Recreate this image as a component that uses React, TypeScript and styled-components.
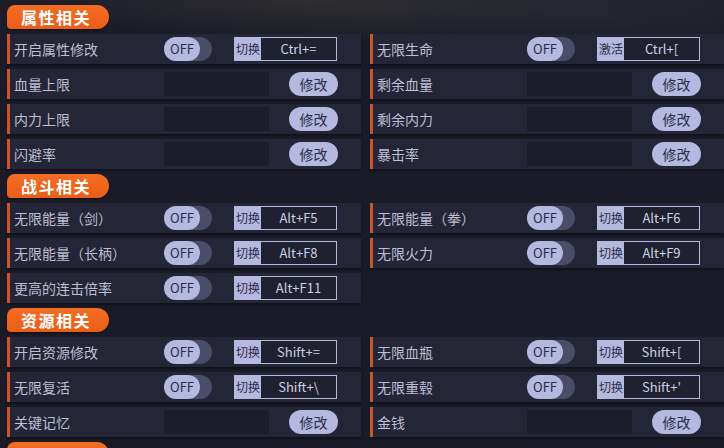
import React from "react";
import styled, { createGlobalStyle } from "styled-components";

const Global = createGlobalStyle`
  html, body { margin: 0; padding: 0; }
  body {
    width: 724px;
    height: 448px;
    overflow: hidden;
    background: #1a1b26;
    font-family: "Noto Sans CJK SC", "Noto Sans", sans-serif;
  }
`;

const Page = styled.div`
  width: 724px;
  height: 448px;
  box-sizing: border-box;
  padding: 5px 0 0 7px;
  background:
    radial-gradient(ellipse 260px 40px at 300px 0px, rgba(120, 110, 80, 0.18), transparent),
    radial-gradient(ellipse 300px 45px at 560px 10px, rgba(90, 100, 90, 0.16), transparent),
    linear-gradient(#1d1e29 0px, #1a1b26 40px);
  display: flex;
  flex-direction: column;
  gap: 5px;
  overflow: hidden;
`;

const Section = styled.section`
  display: flex;
  flex-direction: column;
  gap: 5px;
`;

const Header = styled.div`
  width: 102px;
  height: 24px;
  box-sizing: border-box;
  background: linear-gradient(#f46d24, #ea5d18);
  border-radius: 8px 12px 12px 4px;
  color: #fff;
  font-weight: 700;
  font-size: 16px;
  line-height: 24px;
  letter-spacing: 1.5px;
  padding-left: 14px;
  box-shadow: 0 1px 2px rgba(0, 0, 0, 0.5);
`;

const Grid = styled.div`
  display: grid;
  grid-template-columns: 354px 354px;
  column-gap: 9px;
  row-gap: 5px;
`;

const Row = styled.div`
  height: 30px;
  box-sizing: border-box;
  background: #242536;
  border-left: 3px solid #c9562b;
  display: flex;
  align-items: center;
  box-shadow: 0 2px 2px rgba(0, 0, 0, 0.35);
`;

const Label = styled.div`
  width: 154px;
  padding-left: 4px;
  box-sizing: border-box;
  color: #bdbfd4;
  font-size: 14px;
  white-space: nowrap;
`;

const Toggle = styled.div`
  width: 48px;
  height: 24px;
  border-radius: 12px;
  background: #4b4d68;
  flex: none;
`;

const Knob = styled.div`
  width: 36px;
  height: 24px;
  border-radius: 12px;
  background: #b5b8df;
  color: #2b2d47;
  font-size: 13px;
  line-height: 24px;
  text-align: center;
`;

const Hotkey = styled.div`
  margin-left: 22px;
  width: 103px;
  height: 24px;
  box-sizing: border-box;
  border: 1px solid #b5b8df;
  display: flex;
  flex: none;
`;

const HotkeyTag = styled.div`
  width: 26px;
  background: #b5b8df;
  color: #2b2d47;
  font-size: 12px;
  line-height: 22px;
  text-align: center;
  white-space: nowrap;
`;

const HotkeyKey = styled.div`
  flex: 1;
  background: #1f2030;
  color: #cdd0e6;
  font-size: 13px;
  line-height: 22px;
  text-align: center;
  white-space: nowrap;
`;

const Input = styled.div`
  width: 105px;
  height: 24px;
  background: #1c1d2a;
  flex: none;
`;

const Button = styled.div`
  margin-left: 20px;
  width: 49px;
  height: 24px;
  border-radius: 12px;
  background: #b5b8df;
  color: #2b2d47;
  font-size: 14px;
  line-height: 24px;
  text-align: center;
  flex: none;
`;

type Item =
  | { kind: "toggle"; label: string; tag: string; key: string }
  | { kind: "edit"; label: string };

const ToggleRow = ({ label, tag, keyName }: { label: string; tag: string; keyName: string }) => (
  <Row>
    <Label>{label}</Label>
    <Toggle>
      <Knob>OFF</Knob>
    </Toggle>
    <Hotkey>
      <HotkeyTag>{tag}</HotkeyTag>
      <HotkeyKey>{keyName}</HotkeyKey>
    </Hotkey>
  </Row>
);

const EditRow = ({ label }: { label: string }) => (
  <Row>
    <Label>{label}</Label>
    <Input />
    <Button>修改</Button>
  </Row>
);

const sections: { title: string; items: Item[] }[] = [
  {
    title: "属性相关",
    items: [
      { kind: "toggle", label: "开启属性修改", tag: "切换", key: "Ctrl+=" },
      { kind: "toggle", label: "无限生命", tag: "激活", key: "Ctrl+[" },
      { kind: "edit", label: "血量上限" },
      { kind: "edit", label: "剩余血量" },
      { kind: "edit", label: "内力上限" },
      { kind: "edit", label: "剩余内力" },
      { kind: "edit", label: "闪避率" },
      { kind: "edit", label: "暴击率" },
    ],
  },
  {
    title: "战斗相关",
    items: [
      { kind: "toggle", label: "无限能量（剑）", tag: "切换", key: "Alt+F5" },
      { kind: "toggle", label: "无限能量（拳）", tag: "切换", key: "Alt+F6" },
      { kind: "toggle", label: "无限能量（长柄）", tag: "切换", key: "Alt+F8" },
      { kind: "toggle", label: "无限火力", tag: "切换", key: "Alt+F9" },
      { kind: "toggle", label: "更高的连击倍率", tag: "切换", key: "Alt+F11" },
    ],
  },
  {
    title: "资源相关",
    items: [
      { kind: "toggle", label: "开启资源修改", tag: "切换", key: "Shift+=" },
      { kind: "toggle", label: "无限血瓶", tag: "切换", key: "Shift+[" },
      { kind: "toggle", label: "无限复活", tag: "切换", key: "Shift+\\" },
      { kind: "toggle", label: "无限重毂", tag: "切换", key: "Shift+'" },
      { kind: "edit", label: "关键记忆" },
      { kind: "edit", label: "金钱" },
    ],
  },
  { title: "", items: [] },
];

export default function App() {
  return (
    <>
      <Global />
      <Page>
        {sections.map((s, i) => (
          <Section key={i}>
            <Header>{s.title}</Header>
            {s.items.length > 0 && (
              <Grid>
                {s.items.map((it, j) =>
                  it.kind === "toggle" ? (
                    <ToggleRow key={j} label={it.label} tag={it.tag} keyName={it.key} />
                  ) : (
                    <EditRow key={j} label={it.label} />
                  )
                )}
              </Grid>
            )}
          </Section>
        ))}
      </Page>
    </>
  );
}
